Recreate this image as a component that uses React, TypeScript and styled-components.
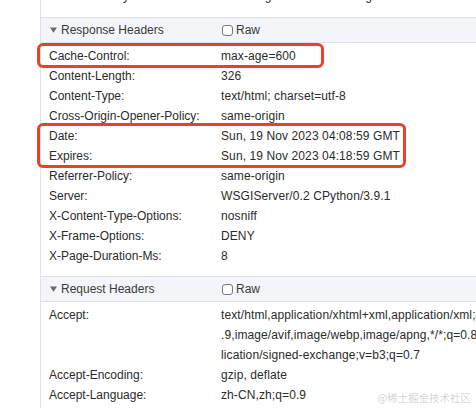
import React from 'react';
import styled, {createGlobalStyle} from 'styled-components';

const GlobalStyle = createGlobalStyle`
  html, body {
    margin: 0;
    padding: 0;
    background: #ffffff;
  }
  body {
    font-family: "Liberation Sans", Arial, "Noto Sans CJK SC", sans-serif;
    font-size: 12px;
    color: #303030;
  }
`;

type Header = {name: string; value: string | string[]};

const responseHeaders: Header[] = [
  {name: 'Cache-Control:', value: 'max-age=600'},
  {name: 'Content-Length:', value: '326'},
  {name: 'Content-Type:', value: 'text/html; charset=utf-8'},
  {name: 'Cross-Origin-Opener-Policy:', value: 'same-origin'},
  {name: 'Date:', value: 'Sun, 19 Nov 2023 04:08:59 GMT'},
  {name: 'Expires:', value: 'Sun, 19 Nov 2023 04:18:59 GMT'},
  {name: 'Referrer-Policy:', value: 'same-origin'},
  {name: 'Server:', value: 'WSGIServer/0.2 CPython/3.9.1'},
  {name: 'X-Content-Type-Options:', value: 'nosniff'},
  {name: 'X-Frame-Options:', value: 'DENY'},
  {name: 'X-Page-Duration-Ms:', value: '8'},
];

const requestHeaders: Header[] = [
  {
    name: 'Accept:',
    value: [
      'text/html,application/xhtml+xml,application/xml;q=0',
      '.9,image/avif,image/webp,image/apng,*/*;q=0.8,app',
      'lication/signed-exchange;v=b3;q=0.7',
    ],
  },
  {name: 'Accept-Encoding:', value: 'gzip, deflate'},
  {name: 'Accept-Language:', value: 'zh-CN,zh;q=0.9'},
];

// rows wrapped in a red box, keyed by the first row and with the box width
const highlights: {start: number; count: number; width: number}[] = [
  {start: 0, count: 1, width: 287},
  {start: 4, count: 2, width: 369},
];

const Page = styled.div`
  position: relative;
  width: 476px;
  height: 408px;
  overflow: hidden;
  background: #ffffff;
`;

const Panel = styled.div`
  margin-left: 40px;
  margin-top: -14px;
  border-left: 1px solid #dde1ec;
  min-height: 440px;
`;

const Rows = styled.div<{$top?: number; $bottom?: number}>`
  display: flex;
  flex-direction: column;
  padding-top: ${p => p.$top ?? 3}px;
  padding-bottom: ${p => p.$bottom ?? 10}px;
`;

const Row = styled.div`
  display: grid;
  grid-template-columns: 172px max-content;
  padding-left: 8px;
  line-height: 20px;
  white-space: nowrap;
`;

const Name = styled.span`
  color: #2b2b2b;
`;

const Value = styled.span`
  display: flex;
  flex-direction: column;
  color: #2b2b2b;
  letter-spacing: 0.1px;
`;

const Highlight = styled.div<{$width: number}>`
  position: relative;

  &::after {
    content: '';
    position: absolute;
    left: -4px;
    top: -3px;
    bottom: -2px;
    width: ${p => p.$width}px;
    box-sizing: border-box;
    border: 3px solid #e8412e;
    border-radius: 6px;
    pointer-events: none;
  }
`;

const SectionBar = styled.div`
  display: flex;
  align-items: center;
  height: 26px;
  box-sizing: border-box;
  border-top: 1px solid #dde1ec;
  border-bottom: 1px solid #dde1ec;
  background: #f3f5fa;
  padding-left: 9px;
  white-space: nowrap;
`;

const Title = styled.div`
  display: flex;
  align-items: center;
  gap: 4px;
  width: 172px;
  color: #3a3a3a;
`;

const RawToggle = styled.label`
  display: flex;
  align-items: center;
  gap: 3px;
  color: #3a3a3a;
`;

const Checkbox = styled.span`
  display: inline-block;
  width: 11px;
  height: 11px;
  box-sizing: border-box;
  border: 1px solid #7a7a7a;
  border-radius: 3px;
  background: #ffffff;
`;

const Watermark = styled.div`
  position: absolute;
  right: 5px;
  bottom: 3px;
  font-family: "Noto Sans CJK SC", sans-serif;
  font-size: 10.5px;
  font-weight: 300;
  color: #c6c6c6;
  white-space: nowrap;
`;

const Caret = () => (
  <svg width="7" height="6" viewBox="0 0 7 6">
    <polygon points="0,0.5 7,0.5 3.5,5.8" fill="#6b6b6b" />
  </svg>
);

const HeaderRow = ({header}: {header: Header}) => (
  <Row>
    <Name>{header.name}</Name>
    <Value>
      {Array.isArray(header.value)
        ? header.value.map(line => <span key={line}>{line}</span>)
        : header.value}
    </Value>
  </Row>
);

const Section = ({title}: {title: string}) => (
  <SectionBar>
    <Title>
      <Caret />
      {title}
    </Title>
    <RawToggle>
      <Checkbox />
      Raw
    </RawToggle>
  </SectionBar>
);

const renderResponse = () => {
  const out: React.ReactNode[] = [];
  let i = 0;
  while (i < responseHeaders.length) {
    const hl = highlights.find(h => h.start === i);
    if (hl) {
      out.push(
        <Highlight key={i} $width={hl.width}>
          {responseHeaders.slice(i, i + hl.count).map(h => (
            <HeaderRow key={h.name} header={h} />
          ))}
        </Highlight>
      );
      i += hl.count;
    } else {
      out.push(<HeaderRow key={i} header={responseHeaders[i]} />);
      i += 1;
    }
  }
  return out;
};

export default function App() {
  return (
    <Page>
      <GlobalStyle />
      <Panel>
        <Rows $top={0} $bottom={11}>
          <HeaderRow
            header={{name: 'Referrer-Policy:', value: 'strict-origin-when-cross-origin'}}
          />
        </Rows>
        <Section title="Response Headers" />
        <Rows>{renderResponse()}</Rows>
        <Section title="Request Headers" />
        <Rows>
          {requestHeaders.map(h => (
            <HeaderRow key={h.name} header={h} />
          ))}
        </Rows>
      </Panel>
      <Watermark>@稀土掘金技术社区</Watermark>
    </Page>
  );
}
